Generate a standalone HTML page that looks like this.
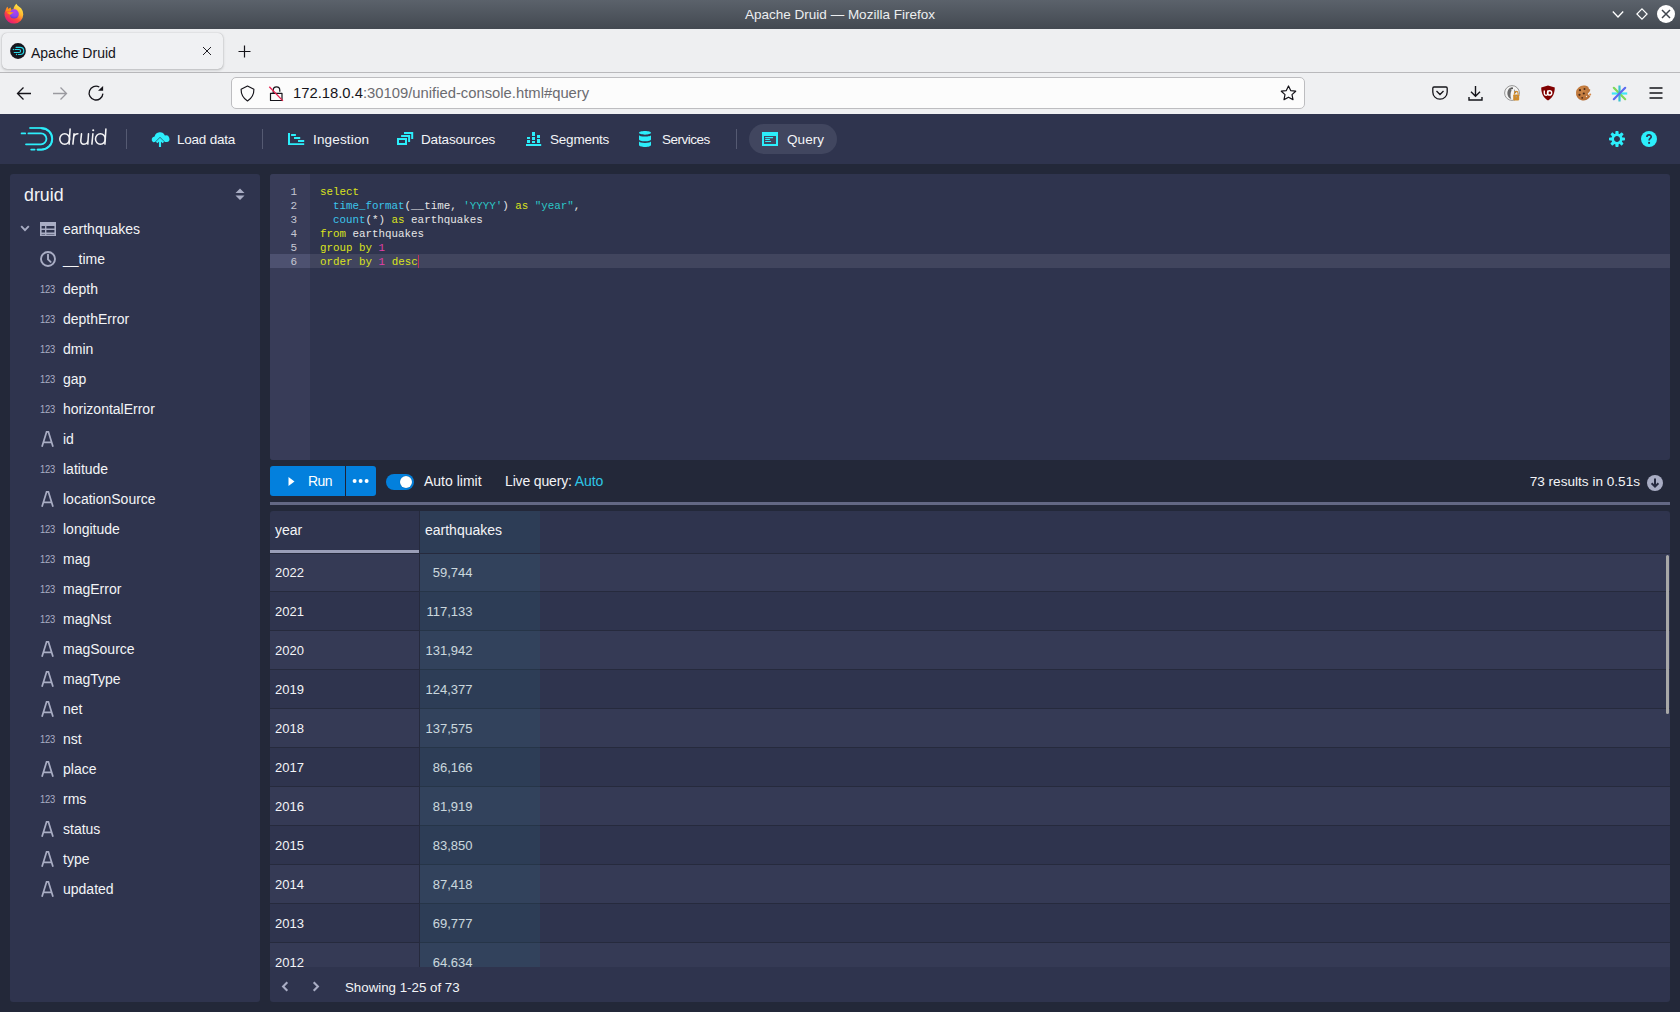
<!DOCTYPE html>
<html><head><meta charset="utf-8">
<style>
*{box-sizing:border-box;margin:0;padding:0}
html,body{width:1680px;height:1012px;overflow:hidden;background:#232839;font-family:"Liberation Sans",sans-serif}
.a{position:absolute}
svg{position:absolute;overflow:visible}
#title{left:0;top:0;width:1680px;height:29px;background:linear-gradient(#5b626b,#434951)}
#ttext{left:0;top:7px;width:1680px;text-align:center;color:#eceef0;font-size:13.5px;line-height:16px}
#tabbar{left:0;top:29px;width:1680px;height:44px;background:#eeeff1;border-bottom:1px solid #b9b9bc}
#tab{left:2px;top:4px;width:221px;height:36px;background:#f0f1f3;border-radius:5px;box-shadow:0 0 1px rgba(0,0,0,.25),0 1px 3px rgba(0,0,0,.22)}
#nav{left:0;top:73px;width:1680px;height:41px;background:#eff0f2}
#url{left:231px;top:4px;width:1074px;height:32px;background:#fcfcfc;border:1px solid #bdbdc0;border-radius:5px}
#hdr{left:0;top:114px;width:1680px;height:50px;background:#2f344e}
.nt{position:absolute;top:1px;line-height:50px;color:#f3f4f7;font-size:13.5px;white-space:nowrap}
.panel{background:#2f344e;border-radius:3px}
.fi{position:absolute;left:0;width:250px;height:30px}
.fi .t{position:absolute;left:53px;top:0;line-height:30px;color:#f3f4f7;font-size:14px;white-space:nowrap}
.n123{position:absolute;left:30px;top:10px;font-size:11.2px;color:#a9adc4;letter-spacing:-0.2px;line-height:11px;transform:scaleX(.84);transform-origin:0 0}
.code{position:absolute;left:320px;font-family:"Liberation Mono",monospace;font-size:10.85px;line-height:14px;white-space:pre;color:#e6e6e6}
.kw{color:#dae21d}.fn{color:#3cc4eb}.st{color:#2cc6c6}.nm{color:#e140a8}
.row{position:absolute;left:0;width:1400px;height:39px;border-bottom:1px solid #262a3d}
.row.odd{background:#353a55}
.cy{position:absolute;left:5px;top:0;line-height:39px;font-size:13px;color:#f3f4f7}
.cn{position:absolute;left:150px;width:52.5px;top:0;line-height:39px;font-size:13px;color:#f3f4f7;text-align:right}
</style></head><body>
<!-- TITLE BAR -->
<div id="title" class="a">
 <svg style="left:0;top:0" width="28" height="28" viewBox="0 0 28 28">
  <defs><linearGradient id="ffg" x1="0.85" y1="0.1" x2="0.25" y2="0.95"><stop offset="0" stop-color="#ffe94a"/><stop offset="0.35" stop-color="#ffb52e"/><stop offset="0.65" stop-color="#ff4a3d"/><stop offset="1" stop-color="#e5197a"/></linearGradient>
  <radialGradient id="ffp" cx="0.55" cy="0.25" r="0.85"><stop offset="0" stop-color="#b33ff0"/><stop offset="0.6" stop-color="#8a45ef"/><stop offset="1" stop-color="#4d3bc8"/></radialGradient></defs>
  <path d="M7.2 6.7 L5.76 9.5 A9.4 9.4 0 1 0 21.1 8.16 C19.5 7 17.4 6 16.4 3.8 C15.2 5.2 13.8 6.8 13.4 9.5 L11.3 9.8 L10.3 7.4 L8.6 9.2 Z" fill="url(#ffg)"/>
  <path d="M5.6 11.5 L7.2 6.7 L8.6 9.2 L10.3 7.4 L11.5 11Z" fill="#ff9017"/>
  <circle cx="14.2" cy="13.9" r="4.6" fill="url(#ffp)"/>
  <path d="M6.6 12.4 C9 11.6 11.6 11.8 13.9 12.5 C12.6 13.3 11.2 13.9 10.4 14.8 C9.2 14.2 7.6 13.2 6.6 12.4Z" fill="#ffa010"/>
 </svg>
 <div id="ttext" class="a">Apache Druid — Mozilla Firefox</div>
 <svg style="left:1612px;top:10px" width="12" height="9" viewBox="0 0 12 9"><path d="M0.8 1.5 L6 7 L11.2 1.5" fill="none" stroke="#fff" stroke-width="1.3"/></svg>
 <svg style="left:1636px;top:8px" width="12" height="12" viewBox="0 0 12 12"><path d="M6 0.9 L11.1 6 L6 11.1 L0.9 6Z" fill="none" stroke="#fff" stroke-width="1.2"/></svg>
 <svg style="left:1657px;top:5px" width="18" height="18" viewBox="0 0 18 18"><circle cx="9" cy="9" r="9" fill="#fff"/><path d="M5 5 L13 13 M13 5 L5 13" stroke="#3f454d" stroke-width="1.5"/></svg>
</div>
<!-- TAB BAR -->
<div id="tabbar" class="a">
 <div id="tab" class="a"></div>
 <svg style="left:10px;top:14px" width="16" height="16" viewBox="0 0 16 16"><circle cx="8" cy="8" r="7.9" fill="#17161d"/>
  <path d="M6.1 4.4 H10.2 A3.55 3.55 0 0 1 10.2 11.5 H8.4 M5.1 6.5 H9.1 A1.5 1.5 0 0 1 9.1 9.5 H4.2" fill="none" stroke="#29d6e6" stroke-width="1.15" stroke-linecap="round"/><circle cx="3.4" cy="6.5" r="0.65" fill="#29d6e6"/><circle cx="6.5" cy="11.5" r="0.65" fill="#29d6e6"/></svg>
 <div class="a" style="left:31px;top:16px;font-size:14px;color:#15141a;line-height:16px">Apache Druid</div>
 <svg style="left:202px;top:17px" width="10" height="10" viewBox="0 0 10 10"><path d="M1 1 L9 9 M9 1 L1 9" stroke="#15141a" stroke-width="0.95"/></svg>
 <svg style="left:238px;top:16px" width="13" height="13" viewBox="0 0 13 13"><path d="M6.5 0.5 V12.5 M0.5 6.5 H12.5" stroke="#15141a" stroke-width="1.2"/></svg>
</div>
<!-- NAV TOOLBAR -->
<div id="nav" class="a">
 <svg style="left:16px;top:13px" width="16" height="15" viewBox="0 0 16 15"><path d="M15 7.5 H1.5 M7.5 1.5 L1.5 7.5 L7.5 13.5" fill="none" stroke="#15141a" stroke-width="1.3"/></svg>
 <svg style="left:52px;top:13px" width="16" height="15" viewBox="0 0 16 15"><path d="M1 7.5 H14.5 M8.5 1.5 L14.5 7.5 L8.5 13.5" fill="none" stroke="#9a9aa0" stroke-width="1.3"/></svg>
 <svg style="left:88px;top:11px" width="17" height="17" viewBox="0 0 17 17"><path d="M14.9 9.6 A6.9 6.9 0 1 1 11.3 3" fill="none" stroke="#15141a" stroke-width="1.3"/><path d="M10 6.8 H15.1 V1.9Z" fill="#15141a"/></svg>
 <div id="url" class="a">
  <svg style="left:8px;top:7px" width="15" height="17" viewBox="0 0 15 17"><path d="M7.5 1 L13.9 4.3 C14 10 11.5 13.5 7.5 16 C3.5 13.5 1 10 1.1 4.3Z" fill="none" stroke="#15141a" stroke-width="1.15" stroke-linejoin="round"/></svg>
  <svg style="left:37px;top:7px" width="15" height="17" viewBox="0 0 15 17"><path d="M4.2 8.3 V5.2 A3.3 3.3 0 0 1 10.8 5.2 V6.8 M1.5 8.3 H13 V15.5 H1.5Z" fill="none" stroke="#15141a" stroke-width="1.2" stroke-linejoin="round"/><path d="M0.3 1.8 L13.9 15.9" stroke="#e8224f" stroke-width="1.3"/></svg>
  <div class="a" style="left:61px;top:6px;font-size:14.8px;line-height:18px;white-space:nowrap;color:#15141a">172.18.0.4<span style="color:#6b6b70">:30109/unified-console.html#query</span></div>
  <svg style="left:1048px;top:7px" width="17" height="16" viewBox="0 0 17 16"><path d="M8.5 1 L10.7 5.6 L15.7 6.2 L12 9.6 L13 14.6 L8.5 12.2 L4 14.6 L5 9.6 L1.3 6.2 L6.3 5.6Z" fill="none" stroke="#15141a" stroke-width="1.2" stroke-linejoin="round"/></svg>
 </div>
 <svg style="left:1432px;top:13px" width="16" height="14" viewBox="0 0 16 14"><path d="M2 1 H14 A1.2 1.2 0 0 1 15.2 2.2 V6 A7.2 7.2 0 0 1 0.8 6 V2.2 A1.2 1.2 0 0 1 2 1Z M4.5 5 L8 8.5 L11.5 5" fill="none" stroke="#15141a" stroke-width="1.3"/></svg>
 <svg style="left:1468px;top:12px" width="15" height="16" viewBox="0 0 15 16"><path d="M7.5 1 V11 M3 6.8 L7.5 11.2 L12 6.8 M1 12 V15 H14 V12" fill="none" stroke="#15141a" stroke-width="1.4"/></svg>
 <svg style="left:1504px;top:12px" width="16" height="16" viewBox="0 0 16 16"><circle cx="8" cy="8" r="7.4" fill="#f4f4f4" stroke="#8a8a8a" stroke-width="0.9"/><path d="M7 2.6 C4 3.5 3 7 3.6 10 C4.2 12.3 5.6 13.6 7.3 14 C6.2 11.5 6.3 8 7.5 5.5Z" fill="#6a6a6a"/><path d="M10 4 L12.5 8 L10.5 8.6Z" fill="#777"/><circle cx="8" cy="3.2" r="1" fill="#444"/><rect x="9.2" y="9.4" width="6" height="6" rx="0.8" fill="#d08b2a"/><path d="M10.4 9.6 V8.2 A1.8 1.8 0 0 1 14 8.2 V9.6" fill="none" stroke="#d08b2a" stroke-width="1.1"/><circle cx="12.2" cy="11.8" r="0.7" fill="#9aa3b0"/></svg>
 <svg style="left:1540px;top:12px" width="16" height="16" viewBox="0 0 16 16"><path d="M8 0.6 L14.8 2.6 C14.8 9 12.3 13 8 15.6 C3.7 13 1.2 9 1.2 2.6Z" fill="#800000"/><path d="M4.3 5.6 V8.6 A1.75 1.75 0 0 0 7.8 8.6 V5.6" fill="none" stroke="#fff" stroke-width="1.4"/><circle cx="9.6" cy="7.9" r="2.1" fill="none" stroke="#fff" stroke-width="1.4"/></svg>
 <svg style="left:1575px;top:12px" width="18" height="16" viewBox="0 0 18 16"><defs><radialGradient id="ck" cx="0.4" cy="0.35" r="0.7"><stop offset="0" stop-color="#d08a4a"/><stop offset="1" stop-color="#b26a32"/></radialGradient></defs><path d="M8.5 0.6 A7.5 7.5 0 1 0 15.4 11 C14 10.5 13 9.6 12.8 8.2 C14 7.8 14.8 6.5 15.4 4.8 C14.2 4.3 13.3 3.2 13.4 2 C12 1 10.3 0.6 8.5 0.6Z" fill="url(#ck)"/><circle cx="5" cy="5.2" r="1.1" fill="#4a2a18"/><circle cx="9.5" cy="4" r="1" fill="#4a2a18"/><circle cx="4.5" cy="9.8" r="1.1" fill="#4a2a18"/><circle cx="8.8" cy="8.5" r="1.1" fill="#4a2a18"/><circle cx="7.2" cy="12.8" r="0.9" fill="#4a2a18"/><circle cx="11.5" cy="11.5" r="0.7" fill="#f5e6d8"/><circle cx="15.2" cy="9.6" r="1" fill="#d4894c"/></svg>
 <svg style="left:1611px;top:12px" width="17" height="17" viewBox="0 0 17 17"><path d="M0.8 8.5 H16.2" stroke="#3fe6f6" stroke-width="2.2"/><path d="M2.8 2.8 L14.2 14.2" stroke="#7fd858" stroke-width="2.2" stroke-linecap="round"/><path d="M8.5 0.5 V16.5" stroke="#37c3cf" stroke-width="2.2"/><path d="M2.8 14.2 L14.2 2.8" stroke="#5b6af0" stroke-width="2.2" stroke-linecap="round"/></svg>
 <svg style="left:1649px;top:14px" width="14" height="12" viewBox="0 0 14 12"><path d="M0.5 1 H13.5 M0.5 6 H13.5 M0.5 11 H13.5" stroke="#15141a" stroke-width="1.3"/></svg>
</div>
<!-- DRUID HEADER -->
<div id="hdr" class="a">
 <svg style="left:0;top:0" width="60" height="50" viewBox="0 114 60 50"><g fill="none" stroke="#2ceefb" stroke-width="1.8" stroke-linecap="round">
  <path d="M30 128 H41.5 A10.8 10.8 0 0 1 41.5 149.6 H37.6" stroke="#2bd3df"/>
  <path d="M41.5 128.3 A10.6 10.6 0 0 1 41.5 149.6 H37.6"/>
  <path d="M28.4 133.4 H41 A5.45 5.45 0 0 1 41 144.3 H26"/>
  <path d="M21.6 133.4 H25.2 M31.2 149.6 H34.6"/>
 </g></svg>
 <svg style="left:56px;top:10px" width="54" height="26" viewBox="0 0 54 26"><g fill="none" stroke="#f3f3f5" stroke-width="1.55" stroke-linecap="round">
  <ellipse cx="8.7" cy="15" rx="4.9" ry="5.2"/><path d="M14.1 5.1 L13.1 20.1"/>
  <path d="M18 9.8 L16.9 20.1 M17.5 13.2 C18.2 10.7 19.8 9.7 21.9 9.7"/>
  <path d="M25.5 9.8 L24.8 16.2 C24.5 18.9 25.8 20.2 28 20.2 C30.4 20.2 31.8 18.6 32.1 16 M32.5 9.8 L31.8 20.1"/>
  <path d="M36.9 9.8 L35.9 20.1"/>
  <ellipse cx="44.4" cy="15" rx="4.9" ry="5.2"/><path d="M49.9 5.1 L48.9 20.1"/>
 </g><circle cx="37.2" cy="6.3" r="1.05" fill="#f3f3f5"/></svg>
 <div class="a" style="left:126px;top:15px;width:1px;height:20px;background:#555a72"></div>
 <svg style="left:152px;top:17px" width="16" height="16" viewBox="0 0 16 16"><path d="M1.2 11.3 A3.2 3.2 0 0 1 2.6 5.4 A5.4 5.4 0 0 1 12.9 4.6 A3.4 3.4 0 0 1 15.2 11 L13 11 L8 6 L3 11Z" fill="#2ceefb"/><path d="M8 16 V9 M4.6 11.6 L8 8.2 L11.4 11.6" fill="none" stroke="#2ceefb" stroke-width="2.1"/></svg>
 <div class="nt" style="left:177px;letter-spacing:-0.22px">Load data</div>
 <div class="a" style="left:262px;top:15px;width:1px;height:20px;background:#555a72"></div>
 <svg style="left:288px;top:17px" width="16" height="16" viewBox="0 0 16 16"><path d="M0 2 H2 V12.2 H16.2 V14 H0Z M3.1 3 H7.9 V5 H3.1Z M6 6 H12.2 V8 H6Z M10 9 H16.2 V11 H10Z" fill="#2ceefb"/></svg>
 <div class="nt" style="left:313px;letter-spacing:0.16px">Ingestion</div>
 <svg style="left:397px;top:17px" width="17" height="16" viewBox="0 0 17 16"><g fill="none" stroke="#2ceefb" stroke-width="2"><rect x="1" y="8" width="8" height="5"/><path d="M4.1 5.1 H12.1 V11"/><path d="M7 2 H15.2 V8.1"/></g></svg>
 <div class="nt" style="left:421px;letter-spacing:-0.15px">Datasources</div>
 <svg style="left:525px;top:17px" width="17" height="16" viewBox="0 0 17 16"><path d="M1 13 H16.2 V15 H1Z M2 6 H5 V8 H2Z M2 9 H5 V12 H2Z M7 1 H10 V5 H7Z M7 6 H10 V9 H7Z M7 10 H10 V12 H7Z M12 4 H15 V7 H12Z M12 8 H15 V12 H12Z" fill="#2ceefb"/></svg>
 <div class="nt" style="left:550px;letter-spacing:-0.21px">Segments</div>
 <svg style="left:637px;top:17px" width="16" height="16" viewBox="0 0 16 16"><path d="M8 3.7 C11.3 3.7 14 2.9 14 1.85 S11.3 0 8 0 2 .8 2 1.85 4.7 3.7 8 3.7Z M2 4.1 V8.4 C2 9.4 4.7 10.3 8 10.3 S14 9.4 14 8.4 V4.1 C14 5.2 11.3 5.6 8 5.6 S2 5.2 2 4.1Z M2 10.3 V14 C2 15.1 4.7 16 8 16 S14 15.1 14 14 V10.3 C14 11.3 11.3 11.9 8 11.9 S2 11.3 2 10.3Z" fill="#2ceefb"/></svg>
 <div class="nt" style="left:662px;letter-spacing:-0.5px">Services</div>
 <div class="a" style="left:736px;top:15px;width:1px;height:20px;background:#555a72"></div>
 <div class="a" style="left:749px;top:10px;width:88px;height:30px;border-radius:15px;background:#41465f"></div>
 <svg style="left:762px;top:17px" width="16" height="16" viewBox="0 0 16 16"><path d="M0 1 H16 V15 H0Z M2 5 V13 H14 V5Z" fill="#2ceefb" fill-rule="evenodd"/><path d="M3.6 6.6 H10.6 M3.6 8.55 H7.5 M3.6 10.5 H8.6" stroke="#2ceefb" stroke-width="1.1" stroke-linecap="round"/></svg>
 <div class="nt" style="left:787px;letter-spacing:0.07px">Query</div>
 <svg style="left:1609px;top:17px" width="16" height="16" viewBox="0 0 16 16"><path fill="#2ceefb" fill-rule="evenodd" d="M15.19 6.39h-1.85c-.11-.37-.27-.71-.45-1.04l1.36-1.36c.31-.31.31-.82 0-1.13l-1.13-1.13a.803.803 0 00-1.13 0l-1.36 1.36c-.33-.17-.67-.33-1.04-.44V.79c0-.44-.36-.8-.8-.8h-1.6c-.44 0-.8.36-.8.8v1.86c-.39.12-.75.28-1.1.47l-1.3-1.3c-.3-.3-.79-.3-1.09 0L1.82 2.91c-.3.3-.3.79 0 1.09l1.3 1.3c-.2.34-.36.7-.48 1.09H.79c-.44 0-.8.36-.8.8v1.6c0 .44.36.8.8.8h1.85c.11.37.27.71.45 1.04l-1.36 1.36c-.31.31-.31.82 0 1.13l1.13 1.13c.31.31.82.31 1.13 0l1.36-1.36c.33.18.67.33 1.04.44v1.86c0 .44.36.8.8.8h1.6c.44 0 .8-.36.8-.8v-1.86c.39-.12.75-.28 1.1-.47l1.3 1.3c.3.3.79.3 1.09 0l1.09-1.09c.3-.3.3-.79 0-1.09l-1.3-1.3c.19-.35.36-.71.47-1.1h1.85c.44 0 .8-.36.8-.8v-1.6a.816.816 0 00-.81-.79zm-7.2 4.6c-1.66 0-3-1.34-3-3s1.34-3 3-3 3 1.34 3 3-1.34 3-3 3z"/></svg>
 <svg style="left:1641px;top:17px" width="16" height="16" viewBox="0 0 16 16"><circle cx="8" cy="8" r="8" fill="#2ceefb"/><path d="M5.9 6 C5.9 3.2 10.2 3.2 10.2 5.8 C10.2 7.4 8.1 7.6 8.1 9.4" fill="none" stroke="#2f344e" stroke-width="1.7"/><rect x="7.15" y="10.9" width="1.9" height="1.9" fill="#2f344e"/></svg>
</div>
<!-- LEFT PANEL -->
<div class="a panel" style="left:10px;top:174px;width:250px;height:828px">
 <div class="a" style="left:14px;top:9px;font-size:17.8px;line-height:25px;color:#f3f4f7">druid</div>
 <svg style="left:225px;top:14px" width="10" height="13" viewBox="0 0 10 13"><path d="M5 0.5 L9.5 5 H0.5Z M0.5 7.5 H9.5 L5 12Z" fill="#a9adc4"/></svg>
 <div class="fi" style="top:40px"><svg style="left:10px;top:11px" width="10" height="7" viewBox="0 0 10 7"><path d="M1.2 1.2 L5 5.2 L8.8 1.2" fill="none" stroke="#a9adc4" stroke-width="1.9"/></svg><svg style="left:30px;top:8px" width="16" height="14" viewBox="0 0 16 14"><path d="M0 0 H16 V14 H0Z M1.6 4 V6.6 H5 V4Z M6.4 4 V6.6 H14.4 V4Z M1.6 8 V10.6 H5 V8Z M6.4 8 V10.6 H14.4 V8Z M1.6 12 V12.4 H5 V12Z M6.4 12 V12.4 H14.4 V12Z" fill="#a9adc4" fill-rule="evenodd"/></svg><div class="t">earthquakes</div></div>
 <div class="fi" style="top:70px"><svg style="left:30px;top:7px" width="16" height="16" viewBox="0 0 16 16"><circle cx="8" cy="8" r="7" fill="none" stroke="#a9adc4" stroke-width="1.9"/><path d="M8 3.6 V8.3 L10.6 10.9" fill="none" stroke="#a9adc4" stroke-width="1.9" stroke-linecap="round"/></svg><div class="t">__time</div></div>
 <div class="fi" style="top:100px"><div class="n123">123</div><div class="t">depth</div></div>
 <div class="fi" style="top:130px"><div class="n123">123</div><div class="t">depthError</div></div>
 <div class="fi" style="top:160px"><div class="n123">123</div><div class="t">dmin</div></div>
 <div class="fi" style="top:190px"><div class="n123">123</div><div class="t">gap</div></div>
 <div class="fi" style="top:220px"><div class="n123">123</div><div class="t">horizontalError</div></div>
 <div class="fi" style="top:250px"><svg style="left:31px;top:7px" width="13" height="16" viewBox="0 0 13 16"><path d="M1 15.8 L5.6 0.8 H7.4 L12 15.8 M3.1 11.3 H9.9" fill="none" stroke="#a9adc4" stroke-width="1.75"/></svg><div class="t">id</div></div>
 <div class="fi" style="top:280px"><div class="n123">123</div><div class="t">latitude</div></div>
 <div class="fi" style="top:310px"><svg style="left:31px;top:7px" width="13" height="16" viewBox="0 0 13 16"><path d="M1 15.8 L5.6 0.8 H7.4 L12 15.8 M3.1 11.3 H9.9" fill="none" stroke="#a9adc4" stroke-width="1.75"/></svg><div class="t">locationSource</div></div>
 <div class="fi" style="top:340px"><div class="n123">123</div><div class="t">longitude</div></div>
 <div class="fi" style="top:370px"><div class="n123">123</div><div class="t">mag</div></div>
 <div class="fi" style="top:400px"><div class="n123">123</div><div class="t">magError</div></div>
 <div class="fi" style="top:430px"><div class="n123">123</div><div class="t">magNst</div></div>
 <div class="fi" style="top:460px"><svg style="left:31px;top:7px" width="13" height="16" viewBox="0 0 13 16"><path d="M1 15.8 L5.6 0.8 H7.4 L12 15.8 M3.1 11.3 H9.9" fill="none" stroke="#a9adc4" stroke-width="1.75"/></svg><div class="t">magSource</div></div>
 <div class="fi" style="top:490px"><svg style="left:31px;top:7px" width="13" height="16" viewBox="0 0 13 16"><path d="M1 15.8 L5.6 0.8 H7.4 L12 15.8 M3.1 11.3 H9.9" fill="none" stroke="#a9adc4" stroke-width="1.75"/></svg><div class="t">magType</div></div>
 <div class="fi" style="top:520px"><svg style="left:31px;top:7px" width="13" height="16" viewBox="0 0 13 16"><path d="M1 15.8 L5.6 0.8 H7.4 L12 15.8 M3.1 11.3 H9.9" fill="none" stroke="#a9adc4" stroke-width="1.75"/></svg><div class="t">net</div></div>
 <div class="fi" style="top:550px"><div class="n123">123</div><div class="t">nst</div></div>
 <div class="fi" style="top:580px"><svg style="left:31px;top:7px" width="13" height="16" viewBox="0 0 13 16"><path d="M1 15.8 L5.6 0.8 H7.4 L12 15.8 M3.1 11.3 H9.9" fill="none" stroke="#a9adc4" stroke-width="1.75"/></svg><div class="t">place</div></div>
 <div class="fi" style="top:610px"><div class="n123">123</div><div class="t">rms</div></div>
 <div class="fi" style="top:640px"><svg style="left:31px;top:7px" width="13" height="16" viewBox="0 0 13 16"><path d="M1 15.8 L5.6 0.8 H7.4 L12 15.8 M3.1 11.3 H9.9" fill="none" stroke="#a9adc4" stroke-width="1.75"/></svg><div class="t">status</div></div>
 <div class="fi" style="top:670px"><svg style="left:31px;top:7px" width="13" height="16" viewBox="0 0 13 16"><path d="M1 15.8 L5.6 0.8 H7.4 L12 15.8 M3.1 11.3 H9.9" fill="none" stroke="#a9adc4" stroke-width="1.75"/></svg><div class="t">type</div></div>
 <div class="fi" style="top:700px"><svg style="left:31px;top:7px" width="13" height="16" viewBox="0 0 13 16"><path d="M1 15.8 L5.6 0.8 H7.4 L12 15.8 M3.1 11.3 H9.9" fill="none" stroke="#a9adc4" stroke-width="1.75"/></svg><div class="t">updated</div></div>
</div>
<!-- EDITOR -->
<div class="a panel" style="left:270px;top:174px;width:1400px;height:286px;overflow:hidden">
 <div class="a" style="left:0;top:0;width:40px;height:286px;background:#383c58"></div>
 <div class="a" style="left:0;top:80px;width:40px;height:14px;background:#4d5170"></div>
 <div class="a" style="left:40px;top:80px;width:1360px;height:14px;background:#41455e"></div>
 <div class="a" style="left:0;width:27px;text-align:right;top:11px;font-family:'Liberation Mono',monospace;font-size:11px;line-height:14px;color:#c5c7d3">1</div>
 <div class="a" style="left:0;width:27px;text-align:right;top:25px;font-family:'Liberation Mono',monospace;font-size:11px;line-height:14px;color:#c5c7d3">2</div>
 <div class="a" style="left:0;width:27px;text-align:right;top:39px;font-family:'Liberation Mono',monospace;font-size:11px;line-height:14px;color:#c5c7d3">3</div>
 <div class="a" style="left:0;width:27px;text-align:right;top:53px;font-family:'Liberation Mono',monospace;font-size:11px;line-height:14px;color:#c5c7d3">4</div>
 <div class="a" style="left:0;width:27px;text-align:right;top:67px;font-family:'Liberation Mono',monospace;font-size:11px;line-height:14px;color:#c5c7d3">5</div>
 <div class="a" style="left:0;width:27px;text-align:right;top:81px;font-family:'Liberation Mono',monospace;font-size:11px;line-height:14px;color:#c5c7d3">6</div>
 <div class="code" style="left:50px;top:11px"><span class="kw">select</span></div>
 <div class="code" style="left:50px;top:25px">  <span class="fn">time_format</span>(__time, <span class="st">'YYYY'</span>) <span class="kw">as</span> <span class="st">"year"</span>,</div>
 <div class="code" style="left:50px;top:39px">  <span class="fn">count</span>(*) <span class="kw">as</span> earthquakes</div>
 <div class="code" style="left:50px;top:53px"><span class="kw">from</span> earthquakes</div>
 <div class="code" style="left:50px;top:67px"><span class="kw">group</span> <span class="kw">by</span> <span class="nm">1</span></div>
 <div class="code" style="left:50px;top:81px"><span class="kw">order</span> <span class="kw">by</span> <span class="nm">1</span> <span class="kw">desc</span></div>
 <div class="a" style="left:148px;top:81px;width:1px;height:13px;background:#c0335a"></div>
</div>
<!-- RUN BAR -->
<div class="a" style="left:270px;top:466px;width:75px;height:30px;background:#0380dd;border-radius:3px 0 0 3px"></div>
<div class="a" style="left:345px;top:466px;width:1px;height:30px;background:#1e2236"></div>
<div class="a" style="left:346px;top:466px;width:30px;height:30px;background:#0380dd;border-radius:0 3px 3px 0"></div>
<svg style="left:288px;top:477px" width="7" height="9" viewBox="0 0 7 9"><path d="M0.5 0 L6.5 4.5 L0.5 9Z" fill="#fff"/></svg>
<div class="a" style="left:308px;top:466px;line-height:30px;font-size:14px;color:#fff;letter-spacing:-0.6px">Run</div>
<svg style="left:352px;top:478px" width="18" height="6" viewBox="0 0 18 6"><circle cx="2.6" cy="3" r="2" fill="#fff"/><circle cx="8.6" cy="3" r="2" fill="#fff"/><circle cx="14.6" cy="3" r="2" fill="#fff"/></svg>
<div class="a" style="left:386px;top:474px;width:28px;height:16px;border-radius:8px;background:#0380dd"></div>
<div class="a" style="left:400px;top:476px;width:12px;height:12px;border-radius:6px;background:#fff;box-shadow:0 0 1px rgba(0,0,0,.4)"></div>
<div class="a" style="left:424px;top:466px;line-height:30px;font-size:14px;color:#f3f4f7">Auto limit</div>
<div class="a" style="left:505px;top:466px;line-height:30px;font-size:14px;color:#f3f4f7;letter-spacing:-0.15px">Live query: <span style="color:#2ec6e6">Auto</span></div>
<div class="a" style="left:1400px;width:240px;text-align:right;top:467px;line-height:30px;font-size:13.6px;color:#f3f4f7">73 results in 0.51s</div>
<svg style="left:1647px;top:475px" width="16" height="16" viewBox="0 0 16 16"><circle cx="8" cy="8" r="8" fill="#a9adc4"/><path d="M8 3.6 V11.4 M4.6 8.2 L8 11.6 L11.4 8.2" fill="none" stroke="#262a3f" stroke-width="2"/></svg>
<div class="a" style="left:270px;top:502px;width:1400px;height:3px;background:#636884"></div>
<!-- TABLE -->
<div class="a panel" style="left:270px;top:511px;width:1400px;height:491px;overflow:hidden">
 <div class="a" style="left:0;top:0;width:1400px;height:456px;overflow:hidden">
  <div class="row odd" style="top:42px"><div class="cy">2022</div><div class="cn">59,744</div></div>
  <div class="row" style="top:81px"><div class="cy">2021</div><div class="cn">117,133</div></div>
  <div class="row odd" style="top:120px"><div class="cy">2020</div><div class="cn">131,942</div></div>
  <div class="row" style="top:159px"><div class="cy">2019</div><div class="cn">124,377</div></div>
  <div class="row odd" style="top:198px"><div class="cy">2018</div><div class="cn">137,575</div></div>
  <div class="row" style="top:237px"><div class="cy">2017</div><div class="cn">86,166</div></div>
  <div class="row odd" style="top:276px"><div class="cy">2016</div><div class="cn">81,919</div></div>
  <div class="row" style="top:315px"><div class="cy">2015</div><div class="cn">83,850</div></div>
  <div class="row odd" style="top:354px"><div class="cy">2014</div><div class="cn">87,418</div></div>
  <div class="row" style="top:393px"><div class="cy">2013</div><div class="cn">69,777</div></div>
  <div class="row odd" style="top:432px"><div class="cy">2012</div><div class="cn">64,634</div></div>
 </div>
 <div class="a" style="left:150px;top:0;width:120px;height:456px;background:rgba(40,100,120,.2)"></div>
 <div class="a" style="left:149px;top:0;width:1px;height:456px;background:#262a3d"></div>
 <div class="a" style="left:0;top:39px;width:149px;height:3px;background:#9a9eb8"></div>
 <div class="a" style="left:0;top:42px;width:1400px;height:1px;background:#262a3d"></div>
 <div class="a" style="left:5px;top:0;line-height:39px;font-size:14px;color:#f3f4f7">year</div>
 <div class="a" style="left:155px;top:0;line-height:39px;font-size:14px;color:#f3f4f7">earthquakes</div>
 <div class="a" style="left:1396px;top:44px;width:3px;height:159px;border-radius:2px;background:#a8a8a8"></div>
 <svg style="left:11px;top:470px" width="8" height="11" viewBox="0 0 8 11"><path d="M6.3 1.2 L2.1 5.5 L6.3 9.8" fill="none" stroke="#a9adc4" stroke-width="2.1"/></svg>
 <svg style="left:42px;top:470px" width="8" height="11" viewBox="0 0 8 11"><path d="M1.7 1.2 L5.9 5.5 L1.7 9.8" fill="none" stroke="#a9adc4" stroke-width="2.1"/></svg>
 <div class="a" style="left:75px;top:459px;line-height:35px;font-size:13.3px;color:#f3f4f7">Showing 1-25 of 73</div>
</div>
</body></html>
